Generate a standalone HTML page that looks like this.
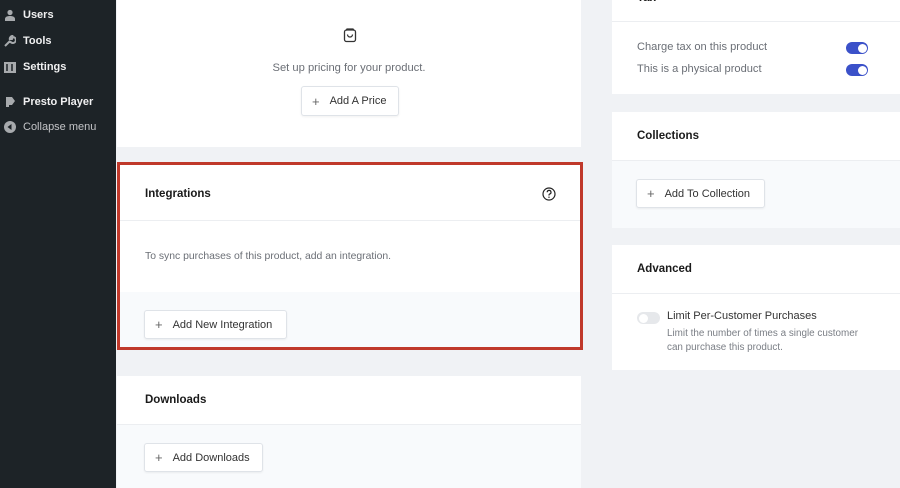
<!DOCTYPE html>
<html><head><style>
*{box-sizing:border-box;margin:0;padding:0}
body{width:900px;height:488px;overflow:hidden;background:#f0f2f5;font-family:"Liberation Sans",sans-serif;position:relative}
.a{position:absolute}
.side{left:0;top:0;width:116px;height:488px;background:#1d2327}
.mi{position:absolute;left:23px;color:#f0f0f1;font-size:11px;font-weight:bold}
.ic{position:absolute;left:4px;width:12px;height:12px}
.card{position:absolute;background:#fff}
.btn{position:absolute;background:#fff;border:1px solid #dfe3e8;border-radius:3px;box-shadow:0 1px 2px rgba(0,0,0,.06);font-size:11px;color:#333;display:flex;align-items:center;padding-left:10px}
.btn b{font-weight:normal;color:#666;font-size:13px;margin-right:10px}
.h{position:absolute;font-size:11.5px;font-weight:bold;color:#1a1a1a}
.t{position:absolute;font-size:10px;color:#6b6f76}
.line{position:absolute;height:1px;background:#eceef1}
.foot{position:absolute;background:#f8fafc}
.tog{position:absolute;width:22px;height:12px;border-radius:6px;background:#3b51c9}
.tog:after{content:"";position:absolute;right:1.5px;top:1.5px;width:9px;height:9px;border-radius:50%;background:#fff}
</style></head><body>
<div class="a side">
 <svg class="ic" style="top:9px" viewBox="0 0 12 12"><circle cx="6" cy="3.5" r="2.6" fill="#a7aaad"/><path d="M1 12v-2c0-2 2-3 5-3s5 1 5 3v2z" fill="#a7aaad"/></svg>
 <div class="mi" style="top:9px">Users</div>
 <svg class="ic" style="top:35px" viewBox="0 0 12 12"><path d="M1 11l5-5M6 6a3 3 0 1 0 3-4l-1 2 -1 0 0-1 1-2a3 3 0 0 0-2 4" stroke="#a7aaad" stroke-width="2" fill="none"/></svg>
 <div class="mi" style="top:35px">Tools</div>
 <svg class="ic" style="top:62px" viewBox="0 0 12 12"><rect width="12" height="11" fill="#a7aaad"/><path d="M3 2v7M8 2v7" stroke="#1d2327" stroke-width="1.5"/></svg>
 <div class="mi" style="top:61px">Settings</div>
 <svg class="ic" style="top:96px" viewBox="0 0 12 12"><path d="M2 1h6l3 4-3 4H5v2H2z" fill="#a7aaad"/></svg>
 <div class="mi" style="top:96px">Presto Player</div>
 <svg class="ic" style="top:121px" viewBox="0 0 12 12"><circle cx="6" cy="6" r="6" fill="#a7aaad"/><path d="M7.5 3v6L3.5 6z" fill="#1d2327"/></svg>
 <div class="mi" style="top:121px;font-weight:normal;color:#c3c4c7">Collapse menu</div>
</div>

<div class="card" style="left:117px;top:0;width:464px;height:147px">
 <svg class="a" style="left:226px;top:28px" width="14" height="15" viewBox="0 0 14 15"><rect x="1.5" y="2" width="11" height="11.5" rx="2" fill="none" stroke="#333" stroke-width="1.3"/><path d="M3 2.5l1-1.5h6l1 1.5M4.5 6.5a2.5 2.5 0 0 0 5 0" fill="none" stroke="#333" stroke-width="1.3"/></svg>
 <div class="t" style="left:0;width:464px;text-align:center;top:62px;font-size:11.2px">Set up pricing for your product.</div>
 <div class="btn" style="left:184px;top:86px;width:98px;height:30px"><b>+</b>Add A Price</div>
</div>

<div class="card" style="left:117px;top:162px;width:466px;height:188px;border:3px solid #c0392b">
 <div class="h" style="left:25px;top:23px">Integrations</div>
 <svg class="a" style="left:422px;top:22px" width="14" height="14" viewBox="0 0 14 14"><circle cx="7" cy="7" r="6" fill="none" stroke="#222" stroke-width="1.2"/><path d="M5.2 5.3a1.9 1.9 0 1 1 2.4 1.8c-.5.2-.6.5-.6 1v.4" fill="none" stroke="#222" stroke-width="1.2"/><circle cx="7" cy="10.2" r=".7" fill="#222"/></svg>
 <div class="line" style="left:0;right:0;top:55px"></div>
 <div class="t" style="left:25px;top:86px;font-size:10.4px">To sync purchases of this product, add an integration.</div>
 <div class="foot" style="left:0;right:0;top:127px;bottom:0"></div>
 <div class="btn" style="left:24px;top:145px;width:143px;height:29px"><b>+</b>Add New Integration</div>
</div>

<div class="card" style="left:117px;top:376px;width:464px;height:112px">
 <div class="h" style="left:28px;top:18px">Downloads</div>
 <div class="line" style="left:0;right:0;top:48px"></div>
 <div class="foot" style="left:0;right:0;top:49px;bottom:0"></div>
 <div class="btn" style="left:27px;top:67px;width:119px;height:29px"><b>+</b>Add Downloads</div>
</div>

<div class="card" style="left:612px;top:0;width:288px;height:94px">
 <div class="h" style="left:25px;top:-8px">Tax</div>
 <div class="line" style="left:0;right:0;top:21px"></div>
 <div class="t" style="left:25px;top:41px;font-size:11.1px">Charge tax on this product</div>
 <div class="t" style="left:25px;top:63px;font-size:11.1px">This is a physical product</div>
 <div class="tog" style="left:234px;top:42px"></div>
 <div class="tog" style="left:234px;top:64px"></div>
</div>

<div class="card" style="left:612px;top:112px;width:288px;height:116px">
 <div class="h" style="left:25px;top:18px">Collections</div>
 <div class="line" style="left:0;right:0;top:48px"></div>
 <div class="foot" style="left:0;right:0;top:49px;bottom:0"></div>
 <div class="btn" style="left:24px;top:67px;width:129px;height:29px"><b>+</b>Add To Collection</div>
</div>

<div class="card" style="left:612px;top:245px;width:288px;height:125px">
 <div class="h" style="left:25px;top:18px">Advanced</div>
 <div class="line" style="left:0;right:0;top:48px"></div>
 <div class="a" style="left:25px;top:67px;width:23px;height:12px;border-radius:6px;background:#e6e8eb"><div class="a" style="left:1.5px;top:1.5px;width:9px;height:9px;border-radius:50%;background:#fff"></div></div>
 <div class="a" style="left:55px;top:65px;font-size:11px;color:#333">Limit Per-Customer Purchases</div>
 <div class="t" style="left:55px;top:82px;font-size:9.9px;line-height:14px;color:#7a7e85">Limit the number of times a single customer<br>can purchase this product.</div>
</div>
</body></html>
